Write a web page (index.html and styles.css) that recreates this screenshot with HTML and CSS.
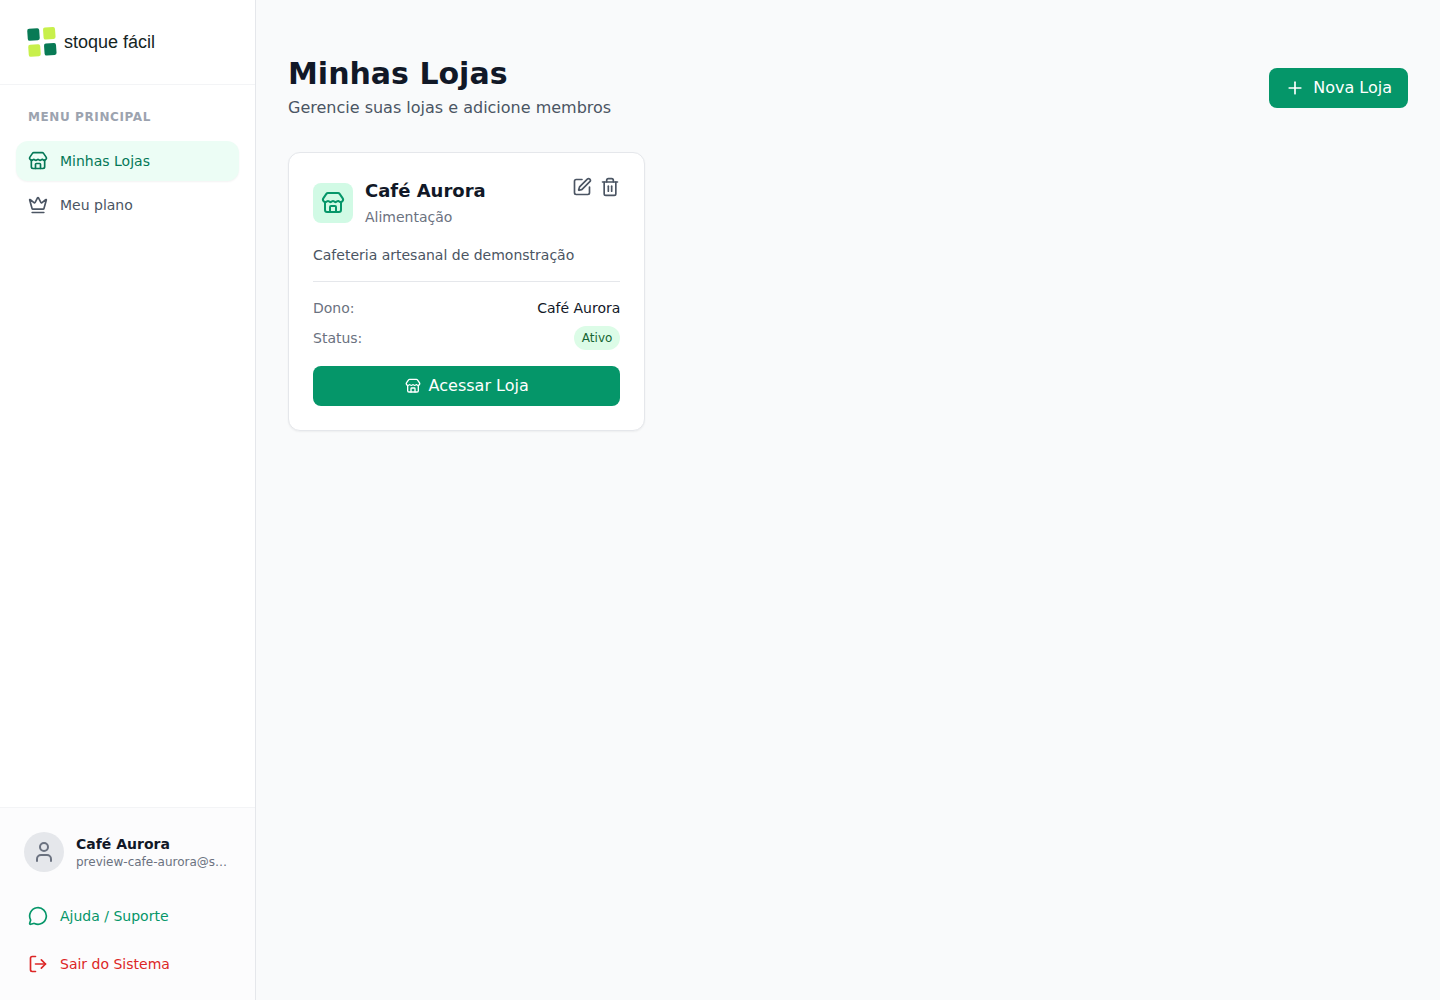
FILE: index.html
```html
<!DOCTYPE html>
<html lang="pt-BR">
<head>
  <meta charset="UTF-8">
  <meta name="viewport" content="width=device-width, initial-scale=1.0">
  <title>Minhas Lojas - Stoque Fácil</title>
  <link rel="stylesheet" href="styles.css">
</head>
<body>
  <svg class="sprite" aria-hidden="true">
    <symbol id="icon-store" viewBox="0 0 24 24">
      <path d="M15 21v-5a1 1 0 0 0-1-1h-4a1 1 0 0 0-1 1v5"/>
      <path d="M17.774 10.31a1.12 1.12 0 0 0-1.549 0 2.5 2.5 0 0 1-3.451 0 1.12 1.12 0 0 0-1.548 0 2.5 2.5 0 0 1-3.452 0 1.12 1.12 0 0 0-1.549 0 2.5 2.5 0 0 1-3.77-3.248l2.889-4.184A2 2 0 0 1 7 2h10a2 2 0 0 1 1.653.873l2.895 4.192a2.5 2.5 0 0 1-3.774 3.244"/>
      <path d="M4 10.95V19a2 2 0 0 0 2 2h12a2 2 0 0 0 2-2v-8.05"/>
    </symbol>
  </svg>

  <aside class="sidebar">
    <div class="logo">
      <svg width="36" height="36" viewBox="0 0 36 36" aria-hidden="true">
        <rect class="logo-dark" x="3.5" y="4.5" width="12" height="12" rx="2" transform="rotate(-4 9.5 10.5)"/>
        <rect class="logo-light" x="19.3" y="3.3" width="12" height="12" rx="2" transform="rotate(-4 25.3 9.3)"/>
        <rect class="logo-light" x="4.5" y="20.5" width="12" height="12" rx="2" transform="rotate(-4 10.5 26.5)"/>
        <rect class="logo-dark" x="20.3" y="19.3" width="12" height="12" rx="2" transform="rotate(-4 26.3 25.3)"/>
      </svg>
      <span class="logo-text">stoque fácil</span>
    </div>

    <nav class="menu">
      <h2 class="menu-title">Menu Principal</h2>
      <a href="#lojas" class="menu-item active">
        <svg class="icon"><use href="#icon-store"/></svg>
        Minhas Lojas
      </a>
      <a href="#plano" class="menu-item">
        <svg class="icon" viewBox="0 0 24 24">
          <path d="M11.562 3.266a.5.5 0 0 1 .876 0L15.39 8.87a1 1 0 0 0 1.516.294L21.183 5.5a.5.5 0 0 1 .798.519l-2.834 10.246a1 1 0 0 1-.956.734H5.81a1 1 0 0 1-.957-.734L2.02 6.02a.5.5 0 0 1 .798-.519l4.276 3.664a1 1 0 0 0 1.516-.294z"/>
          <path d="M5 21h14"/>
        </svg>
        Meu plano
      </a>
    </nav>

    <div class="sidebar-footer">
      <div class="user">
        <div class="avatar">
          <svg class="icon icon-lg" viewBox="0 0 24 24">
            <path d="M19 21v-2a4 4 0 0 0-4-4H9a4 4 0 0 0-4 4v2"/>
            <circle cx="12" cy="7" r="4"/>
          </svg>
        </div>
        <div class="user-info">
          <p class="user-name">Café Aurora</p>
          <p class="user-email">preview-cafe-aurora@stoquefacil.com</p>
        </div>
      </div>
      <div class="footer-actions">
        <a href="#suporte" class="menu-item help">
          <svg class="icon" viewBox="0 0 24 24">
            <path d="M2.992 16.342a2 2 0 0 1 .094 1.167l-1.065 3.29a1 1 0 0 0 1.236 1.168l3.413-.998a2 2 0 0 1 1.099.092 10 10 0 1 0-4.777-4.719"/>
          </svg>
          Ajuda / Suporte
        </a>
        <button type="button" class="menu-item logout">
          <svg class="icon" viewBox="0 0 24 24">
            <path d="m16 17 5-5-5-5"/>
            <path d="M21 12H9"/>
            <path d="M9 21H5a2 2 0 0 1-2-2V5a2 2 0 0 1 2-2h4"/>
          </svg>
          Sair do Sistema
        </button>
      </div>
    </div>
  </aside>

  <main class="content">
    <header class="page-header">
      <div>
        <h1>Minhas Lojas</h1>
        <p class="subtitle">Gerencie suas lojas e adicione membros</p>
      </div>
      <button type="button" class="btn">
        <svg class="icon" viewBox="0 0 24 24">
          <path d="M5 12h14"/>
          <path d="M12 5v14"/>
        </svg>
        Nova Loja
      </button>
    </header>

    <section class="stores">
      <article class="card">
        <div class="card-header">
          <div class="store-icon">
            <svg class="icon icon-lg"><use href="#icon-store"/></svg>
          </div>
          <div class="store-title">
            <h3>Café Aurora</h3>
            <p>Alimentação</p>
          </div>
          <div class="card-actions">
            <button type="button" class="icon-btn" aria-label="Editar loja">
              <svg class="icon" viewBox="0 0 24 24">
                <path d="M12 3H5a2 2 0 0 0-2 2v14a2 2 0 0 0 2 2h14a2 2 0 0 0 2-2v-7"/>
                <path d="M18.375 2.625a1 1 0 0 1 3 3l-9.013 9.014a2 2 0 0 1-.853.505l-2.873.84a.5.5 0 0 1-.62-.62l.84-2.873a2 2 0 0 1 .506-.852z"/>
              </svg>
            </button>
            <button type="button" class="icon-btn" aria-label="Excluir loja">
              <svg class="icon" viewBox="0 0 24 24">
                <path d="M3 6h18"/>
                <path d="M19 6v14a2 2 0 0 1-2 2H7a2 2 0 0 1-2-2V6"/>
                <path d="M8 6V4a2 2 0 0 1 2-2h4a2 2 0 0 1 2 2v2"/>
                <path d="M10 11v6"/>
                <path d="M14 11v6"/>
              </svg>
            </button>
          </div>
        </div>

        <p class="description">Cafeteria artesanal de demonstração</p>

        <dl class="details">
          <div class="detail-row">
            <dt>Dono:</dt>
            <dd>Café Aurora</dd>
          </div>
          <div class="detail-row">
            <dt>Status:</dt>
            <dd class="badge">Ativo</dd>
          </div>
        </dl>

        <button type="button" class="btn btn-block">
          <svg class="icon icon-sm"><use href="#icon-store"/></svg>
          Acessar Loja
        </button>
      </article>
    </section>
  </main>
</body>
</html>
```
FILE: styles.css
```css
:root {
  --primary: #059669;
  --primary-dark: #047857;
  --primary-light: #ecfdf5;
  --danger: #dc2626;
  --text: #111827;
  --text-soft: #4b5563;
  --text-muted: #6b7280;
  --border: #e5e7eb;
  --border-light: #f3f4f6;
  --background: #f9fafb;
}

* {
  box-sizing: border-box;
  margin: 0;
  padding: 0;
}

body {
  display: flex;
  min-height: 100vh;
  font-family: "DejaVu Sans", Verdana, sans-serif;
  font-size: 16px;
  line-height: 24px;
  color: var(--text);
  background: var(--background);
}

a {
  text-decoration: none;
}

button {
  font: inherit;
  border: none;
  background: none;
  cursor: pointer;
}

.sprite {
  display: none;
}

.icon {
  width: 20px;
  height: 20px;
  flex-shrink: 0;
  fill: none;
  stroke: currentColor;
  stroke-width: 2;
  stroke-linecap: round;
  stroke-linejoin: round;
}

.icon-sm {
  width: 16px;
  height: 16px;
}

.icon-lg {
  width: 24px;
  height: 24px;
}

/* Sidebar */
.sidebar {
  display: flex;
  flex-direction: column;
  width: 256px;
  flex-shrink: 0;
  background: white;
  border-right: 1px solid var(--border);
}

.logo {
  display: flex;
  align-items: center;
  gap: 4px;
  padding: 24px;
  border-bottom: 1px solid var(--border-light);
}

.logo-dark {
  fill: #087a55;
}

.logo-light {
  fill: #c8f04b;
}

.logo-text {
  font-family: "Liberation Sans", Arial, sans-serif;
  font-size: 18px;
  color: #15251f;
}

.menu {
  flex: 1;
  display: flex;
  flex-direction: column;
  gap: 4px;
  padding: 24px 16px;
}

.menu-title {
  margin-bottom: 12px;
  padding: 0 12px;
  font-size: 12px;
  line-height: 16px;
  font-weight: bold;
  letter-spacing: 0.05em;
  text-transform: uppercase;
  color: #9ca3af;
}

.menu-item {
  display: flex;
  align-items: center;
  gap: 12px;
  width: 100%;
  padding: 10px 12px;
  font-size: 14px;
  line-height: 20px;
  color: var(--text-soft);
  border-radius: 12px;
}

.menu-item.active {
  color: var(--primary-dark);
  background: var(--primary-light);
  box-shadow: 0 1px 2px rgba(0, 0, 0, 0.05);
}

.menu-item.help {
  color: var(--primary);
}

.menu-item.logout {
  color: var(--danger);
}

.sidebar-footer {
  display: flex;
  flex-direction: column;
  gap: 16px;
  padding: 16px;
  background: #fcfcfd;
  border-top: 1px solid var(--border-light);
}

.user {
  display: flex;
  align-items: center;
  gap: 12px;
  padding: 8px;
}

.avatar {
  display: flex;
  align-items: center;
  justify-content: center;
  width: 40px;
  height: 40px;
  flex-shrink: 0;
  color: var(--text-muted);
  background: var(--border);
  border-radius: 50%;
}

.user-info {
  flex: 1;
  min-width: 0;
}

.user-name {
  font-size: 14px;
  line-height: 20px;
  font-weight: bold;
}

.user-email {
  font-size: 12px;
  line-height: 16px;
  color: var(--text-muted);
  overflow: hidden;
  text-overflow: ellipsis;
  white-space: nowrap;
}

.footer-actions {
  display: flex;
  flex-direction: column;
  gap: 8px;
}

/* Content */
.content {
  flex: 1;
  min-width: 0;
  padding: 56px 32px;
}

.page-header {
  display: flex;
  align-items: center;
  justify-content: space-between;
  margin-bottom: 32px;
}

h1 {
  font-size: 30px;
  line-height: 36px;
}

.subtitle {
  margin-top: 4px;
  color: var(--text-soft);
}

.btn {
  display: flex;
  align-items: center;
  justify-content: center;
  gap: 8px;
  padding: 8px 16px;
  color: white;
  background: var(--primary);
  border-radius: 8px;
}

.btn:hover {
  background: var(--primary-dark);
}

.btn-block {
  width: 100%;
}

.stores {
  display: grid;
  grid-template-columns: repeat(3, 1fr);
  gap: 24px;
}

.card {
  padding: 24px;
  background: white;
  border: 1px solid var(--border);
  border-radius: 12px;
  box-shadow: 0 1px 2px rgba(0, 0, 0, 0.05);
}

.card-header {
  display: flex;
  align-items: center;
  gap: 12px;
  margin-bottom: 16px;
}

.store-icon {
  display: flex;
  align-items: center;
  justify-content: center;
  width: 40px;
  height: 40px;
  color: var(--primary);
  background: #d1fae5;
  border-radius: 8px;
}

.store-title {
  flex: 1;
}

.store-title h3 {
  font-size: 18px;
  line-height: 28px;
}

.store-title p {
  font-size: 14px;
  color: var(--text-muted);
}

.card-actions {
  display: flex;
  align-self: flex-start;
  gap: 8px;
}

.icon-btn {
  display: flex;
  color: var(--text-soft);
}

.description {
  font-size: 14px;
  line-height: 20px;
  color: var(--text-soft);
}

.details {
  display: flex;
  flex-direction: column;
  gap: 8px;
  margin: 16px 0;
  padding-top: 16px;
  font-size: 14px;
  line-height: 20px;
  border-top: 1px solid var(--border);
}

.detail-row {
  display: flex;
  align-items: center;
  justify-content: space-between;
}

.detail-row dt {
  color: var(--text-muted);
}

.badge {
  padding: 4px 8px;
  font-size: 12px;
  line-height: 16px;
  color: #166534;
  background: #dcfce7;
  border-radius: 12px;
}
```
